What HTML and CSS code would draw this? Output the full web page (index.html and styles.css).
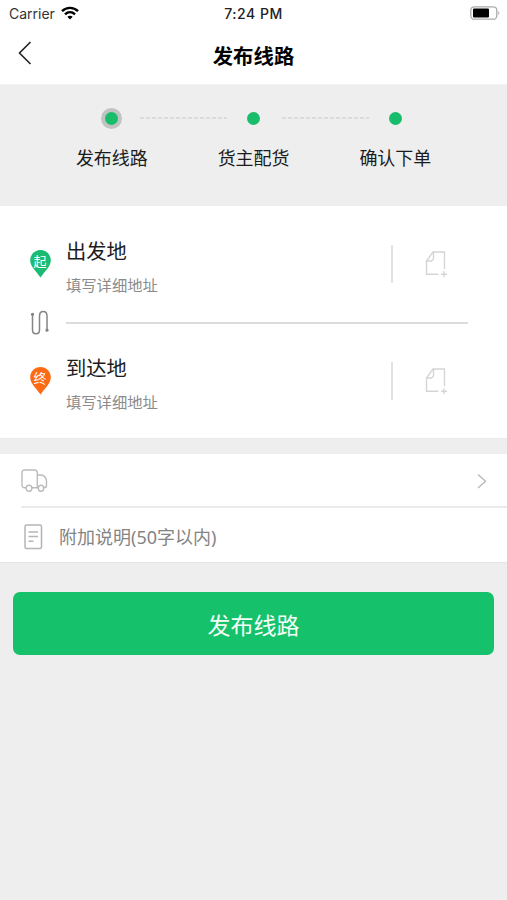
FILE: index.html
```html
<!DOCTYPE html>
<html lang="zh-CN">
<head>
<meta charset="utf-8">
<title>发布线路</title>
<link rel="stylesheet" href="styles.css">
</head>
<body>
<header class="header">
  <div class="status">
    <div class="carrier"><span>Carrier</span>
      <svg class="wifi" width="18" height="14" viewBox="0 0 18 14" fill="none" stroke="#000" stroke-width="2.4"><path d="M1 5.1C5.5.8 12.500.8 17 5.100"/><path d="M4 8.300c2.900-2.700 7.100-2.700 10 0"/><path d="M6.300 10.800Q9 8.700 11.700 10.800L9 13.500Z" fill="#000" stroke="none"/></svg>
    </div>
    <time class="time">7:24 PM</time>
    <svg class="battery" width="31" height="14" viewBox="0 0 31 14"><rect x=".8" y=".8" width="26" height="12.400" rx="3.500" fill="#fff" stroke="#aaa" stroke-width="1.300"/><rect x="3" y="2.500" width="16" height="9" rx="1" fill="#000"/><path d="M28.300 4.700q2.200 2.300 0 4.600z" fill="#aaa"/></svg>
  </div>
  <div class="nav">
    <svg class="back" width="14" height="24" viewBox="0 0 14 24" fill="none" stroke="#222" stroke-width="1.600"><path d="M12.500 1 1.500 12l11 11"/></svg>
    <h1 class="title">发布线路</h1>
  </div>
</header>

<ol class="steps">
  <li class="step current"><span class="dot"></span><span class="label">发布线路</span></li>
  <li class="step"><span class="dot"></span><span class="label">货主配货</span></li>
  <li class="step"><span class="dot"></span><span class="label">确认下单</span></li>
</ol>

<main>
  <section class="route">
    <div class="place">
      <div class="pin start"><svg width="21" height="28" viewBox="0 0 21 28"><path d="M10.500 0C4.700 0 .2 4.500.2 10.300c0 6 5.200 10 10.300 17.300 5.100-7.300 10.300-11.300 10.300-17.300C20.800 4.500 16.300 0 10.500 0z" fill="currentColor"/></svg><span>起</span></div>
      <div class="address"><div class="name">出发地</div><div class="hint">填写详细地址</div></div>
      <div class="book"><svg width="24" height="29" viewBox="0 0 24 29" fill="none" stroke="#d5d5d5" stroke-width="1.400"><path d="M13.500 24.200H1.500V11L8 2h11.500v17M1.500 11h5L8.500 9V2"/><path d="M16 24.200h6M19 21.200v6"/></svg></div>
    </div>
    <div class="between">
      <svg width="20" height="26" viewBox="0 0 20 26" fill="none" stroke="#858585" stroke-width="1.500"><path d="M2.500 4v16c0 5 7 5 7 0V6c0-6 7.500-6 7.500 0v14"/><circle cx="2.500" cy="4.300" r=".9" fill="#858585"/><circle cx="17" cy="20.200" r=".9" fill="#858585"/></svg>
      <div class="rule"></div>
    </div>
    <div class="place">
      <div class="pin end"><svg width="21" height="28" viewBox="0 0 21 28"><path d="M10.500 0C4.700 0 .2 4.500.2 10.300c0 6 5.200 10 10.300 17.300 5.100-7.300 10.300-11.300 10.300-17.300C20.800 4.500 16.300 0 10.500 0z" fill="currentColor"/></svg><span>终</span></div>
      <div class="address"><div class="name">到达地</div><div class="hint">填写详细地址</div></div>
      <div class="book"><svg width="24" height="29" viewBox="0 0 24 29" fill="none" stroke="#d5d5d5" stroke-width="1.400"><path d="M13.500 24.200H1.500V11L8 2h11.500v17M1.500 11h5L8.500 9V2"/><path d="M16 24.200h6M19 21.200v6"/></svg></div>
    </div>
  </section>

  <section class="details">
    <div class="row vehicle">
      <svg width="27" height="24" viewBox="0 0 27 24" fill="none" stroke="#bbb" stroke-width="1.400"><path d="M5 18.700H3.500A2.500 2.500 0 0 1 1 16.200V3.500A2.500 2.500 0 0 1 3.500 1h10.300A2.500 2.500 0 0 1 16.300 3.500v15.200h-5.500M16.300 6h3.700c3.300 0 5.500 3 5.500 6.500v3.700c0 1.500-1 2.500-2.500 2.500"/><ellipse cx="8" cy="19.300" rx="2.900" ry="3" fill="#fff"/><ellipse cx="20" cy="19.300" rx="2.700" ry="3" fill="#fff"/></svg>
      <svg class="more" width="10" height="16" viewBox="0 0 10 16" fill="none" stroke="#bbb" stroke-width="1.500"><path d="m1 1.500 7.500 6.700L1 15"/></svg>
    </div>
    <div class="row note">
      <svg width="19" height="26" viewBox="0 0 19 26" fill="none" stroke="#b5b5b5" stroke-width="1.500"><rect x="1" y="1" width="16.500" height="23.500" rx="1.500"/><path d="M4.500 8h9.500M4.500 12.600h9.500M4.500 17.200h5"/></svg>
      <span>附加说明(50字以内)</span>
    </div>
  </section>
  <button class="submit" type="button">发布线路</button>
</main>
</body>
</html>
```

FILE: styles.css
```css
* { box-sizing: border-box; }

body {
  margin: 0;
  min-height: 900px;
  background: #eee;
  color: #1c1c1c;
  font-family: "Noto Sans", "Noto Sans CJK SC", sans-serif;
}

.header {
  height: 85px;
  background: #fff;
  border-bottom: 1px solid #f3f3f3;
}

.status {
  display: grid;
  grid-template-columns: 1fr auto 1fr;
  align-items: center;
  height: 27px;
  padding: 0 6px 1px 6px;
  font-family: Inter, sans-serif;
  font-size: 14px;
  color: #333;
}

.carrier { display: flex; align-items: center; gap: 6px; padding-left: 3px; }
.time { font-weight: 500; color: #222; letter-spacing: 0.55px; }
.battery { justify-self: end; }

.nav {
  display: grid;
  grid-template-columns: 14px 1fr 14px;
  align-items: center;
  height: 57px;
  padding: 0 18px;
}

.back { margin-top: -5px; }

.title {
  margin: 0;
  text-align: center;
  font-size: 20.4px;
  line-height: 30px;
  font-weight: 700;
  color: #000;
}

.steps {
  display: grid;
  grid-template-columns: repeat(3, 141.75px);
  height: 121px;
  margin: 0;
  padding: 21px 0 0 41px;
  list-style: none;
}

.step {
  display: grid;
  grid-template-rows: 24px 28px;
  row-gap: 14px;
  align-content: start;
  justify-items: center;
  align-items: center;
  position: relative;
}

.dot {
  width: 13px;
  height: 13px;
  border-radius: 50%;
  background: #18bd6b;
}

.current .dot { box-shadow: 0 0 0 4px #bfc3c1; }

.step:not(:last-child)::after {
  content: "";
  position: absolute;
  left: 99px;
  top: 11px;
  width: 87px;
  height: 2px;
  background: repeating-linear-gradient(90deg, #dbdbdb 0 4px, transparent 4px 6px);
}

.label { font-size: 18px; line-height: 28px; }

.route {
  height: 233px;
  padding-top: 24px;
  background: #fff;
  border-bottom: 1px solid #eaeaea;
}

.place {
  display: grid;
  grid-template-columns: 37px 325px 1fr;
  height: 68px;
  padding-left: 29px;
}

.pin {
  position: relative;
  width: 22px;
  height: 28px;
  margin: 20px 0 0 0.5px;
}

.pin svg { display: block; }
.pin.start { color: #1abc73; }
.pin.end { color: #fa6b14; }

.pin span {
  position: absolute;
  inset: 0 1px auto 0;
  text-align: center;
  color: #fff;
  font-size: 13px;
  line-height: 22px;
}

.name { font-size: 20.3px; line-height: 42px; }
.hint { font-size: 15.3px; line-height: 26px; color: #8b8b8b; }

.book {
  display: flex;
  align-items: center;
  align-self: start;
  height: 38px;
  margin-top: 15px;
  padding-left: 32px;
  border-left: 2px solid #e2e2e2;
}

.between {
  display: flex;
  align-items: center;
  gap: 16px;
  height: 49px;
  padding: 1px 39px 0 30px;
}

.rule { flex: 1; height: 2px; background: #dcdcdc; }

.details {
  margin-top: 15px;
  background: #fff;
  border-bottom: 1px solid #e4e4e4;
}

.row { display: flex; align-items: center; }

.vehicle {
  justify-content: space-between;
  height: 54px;
  margin-left: 21px;
  padding: 2px 20px 0 0;
  border-bottom: 2px solid #ebebeb;
}

.note {
  gap: 16px;
  height: 54px;
  padding: 3px 0 0 24px;
  font-size: 18px;
  color: #848484;
}

.note span { margin-top: -1px; }

.submit {
  display: block;
  width: 481px;
  height: 63px;
  margin: 29px 0 0 13px;
  padding: 0;
  border: 0;
  border-radius: 7px;
  background: #15c16a;
  color: #f2fff8;
  font: inherit;
  font-size: 23px;
}
```
